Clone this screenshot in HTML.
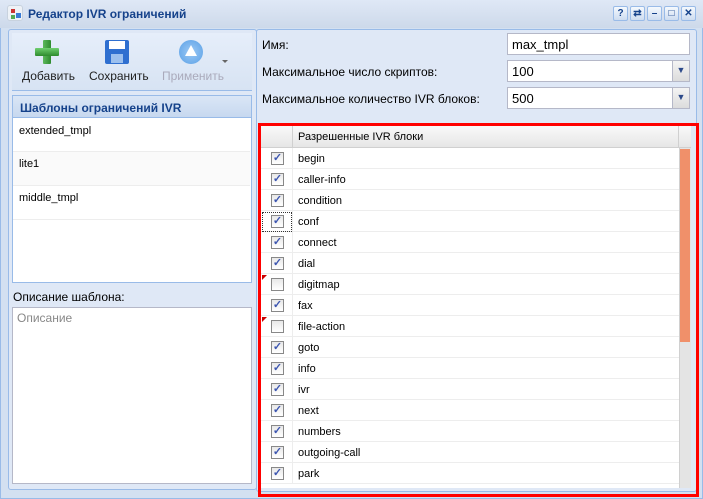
<!DOCTYPE html><html><head><meta charset="utf-8"><style>
*{box-sizing:border-box;margin:0;padding:0}
body{width:703px;height:499px;overflow:hidden;background:#cdd9e8;font-family:"Liberation Sans",sans-serif;font-size:11px;color:#000;position:relative}
.a{position:absolute}
.win{left:0;top:0;width:703px;height:499px;background:#d3e0f1;border:1px solid #99bbe8}
.title{left:0;top:0;width:703px;height:28px;background:linear-gradient(#dfe8f6,#cdd9ea)}
.panel{background:#dfe8f6;border:1px solid #99bbe8}
.tb{font-size:12px;color:#222}
.inp{background:#fff;border:1px solid #b5b8c8;font-size:13px;padding:3px 4px}
.btn{width:15px;height:15px;border:1px solid #99bbe8;border-radius:2px;background:linear-gradient(#f5f9fe,#cddcf0);font-size:10px;text-align:center;line-height:13px;color:#15428b;font-weight:bold}
.row{left:0;width:418px;height:21px;border-bottom:1px solid #ededed;font-size:11px}
.row span{position:absolute;left:37px;top:5px}
.cb{position:absolute;left:10px;top:4px;width:13px;height:13px;border:1px solid #888;background:linear-gradient(#e8e8e8,#fff);color:#3d56b0;font-size:11px;line-height:11px;text-align:center;font-weight:bold}
.vl{position:absolute;left:31px;top:0;width:1px;height:100%;background:#ededed}
</style></head><body>
<div class="a win"></div>
<div class="a title"></div>
<div class="a" style="left:7px;top:5px;width:16px;height:16px;border-radius:3px;background:#eef2f7;border:1px solid #c8d2de"><div class="a" style="left:3px;top:3px;width:4px;height:4px;background:#c33"></div><div class="a" style="left:8px;top:7px;width:5px;height:5px;background:#3a7bd5"></div><div class="a" style="left:3px;top:9px;width:4px;height:4px;background:#5a5"></div></div>
<div class="a" style="left:28px;top:7px;font-size:12px;font-weight:bold;color:#15428b">Редактор IVR ограничений</div>
<div class="a btn" style="left:613px;top:6px">?</div>
<div class="a btn" style="left:630px;top:6px">⇄</div>
<div class="a btn" style="left:647px;top:6px">–</div>
<div class="a btn" style="left:664px;top:6px">□</div>
<div class="a btn" style="left:681px;top:6px">✕</div>

<div class="a panel" style="left:8px;top:29px;width:249px;height:461px;border-radius:3px"></div>
<div class="a" style="left:12px;top:33px;width:240px;height:58px;background:linear-gradient(#e6eefa,#d7e3f3);border-bottom:1px solid #99bbe8"></div>
<div class="a" style="left:35px;top:40px;width:24px;height:24px"><div class="a" style="left:8px;top:0;width:8px;height:24px;background:linear-gradient(90deg,#5cb85c,#2e8b2e);border-radius:1px"></div><div class="a" style="left:0;top:8px;width:24px;height:8px;background:linear-gradient(#6fcf6f,#2e8b2e);border-radius:1px"></div></div>
<div class="a tb" style="left:22px;top:69px">Добавить</div>
<div class="a" style="left:105px;top:40px;width:24px;height:24px;background:#2f6fd0;border-radius:2px"><div class="a" style="left:4px;top:1px;width:16px;height:8px;background:#fff"></div><div class="a" style="left:6px;top:14px;width:12px;height:9px;background:#9cc0ee"></div></div>
<div class="a tb" style="left:89px;top:69px">Сохранить</div>
<div class="a" style="left:179px;top:40px;width:24px;height:24px;border-radius:50%;background:radial-gradient(#9cc9f5,#5aa0e6)"><div class="a" style="left:6px;top:5px;width:0;height:0;border-left:6px solid transparent;border-right:6px solid transparent;border-bottom:11px solid #fff"></div></div>
<div class="a tb" style="left:162px;top:69px;color:#aab">Применить</div>
<div class="a" style="left:222px;top:60px;border-left:3px solid transparent;border-right:3px solid transparent;border-top:3px solid #666"></div>
<div class="a" style="left:12px;top:95px;width:240px;height:23px;background:linear-gradient(#dae6f6,#c7d8ef);border:1px solid #99bbe8;font-weight:bold;color:#15428b;font-size:12px;padding:5px 7px">Шаблоны ограничений IVR</div>
<div class="a" style="left:12px;top:118px;width:240px;height:165px;background:#fff;border:1px solid #99bbe8;border-top:none"></div>
<div class="a" style="left:13px;top:118px;width:237px;height:34px;border-bottom:1px solid #ededed;padding:7px 6px">extended_tmpl</div>
<div class="a" style="left:13px;top:152px;width:237px;height:34px;background:#fafafa;border-bottom:1px solid #ededed;padding:6px 6px">lite1</div>
<div class="a" style="left:13px;top:186px;width:237px;height:34px;border-bottom:1px solid #ededed;padding:6px 6px">middle_tmpl</div>
<div class="a" style="left:13px;top:290px;font-size:12px">Описание шаблона:</div>
<div class="a" style="left:12px;top:307px;width:240px;height:177px;background:#fff;border:1px solid #b5b8c8;color:#888;font-size:12px;padding:3px 4px">Описание</div>

<div class="a panel" style="left:256px;top:29px;width:441px;height:463px;border-radius:3px"></div>
<div class="a" style="left:262px;top:38px;font-size:12px">Имя:</div>
<div class="a" style="left:262px;top:65px;font-size:12px">Максимальное число скриптов:</div>
<div class="a" style="left:262px;top:92px;font-size:12px">Максимальное количество IVR блоков:</div>
<div class="a inp" style="left:507px;top:33px;width:183px;height:22px">max_tmpl</div>
<div class="a inp" style="left:507px;top:60px;width:183px;height:22px">100</div>
<div class="a inp" style="left:507px;top:87px;width:183px;height:22px">500</div>
<div class="a" style="left:672px;top:61px;width:17px;height:20px;background:linear-gradient(#f4f4f4,#dcdcdc);border-left:1px solid #b5b8c8;color:#2d4a8a;font-size:9px;text-align:center;line-height:18px">▼</div>
<div class="a" style="left:672px;top:88px;width:17px;height:20px;background:linear-gradient(#f4f4f4,#dcdcdc);border-left:1px solid #b5b8c8;color:#2d4a8a;font-size:9px;text-align:center;line-height:18px">▼</div>

<div class="a" style="left:258px;top:123px;width:441px;height:374px;border:3px solid #f00"></div>
<div class="a" style="left:261px;top:126px;width:430px;height:362px;background:#fff;overflow:hidden">
<div class="a" style="left:0;top:0;width:430px;height:22px;background:linear-gradient(#f9f9f9,#e6e6e6);border-bottom:1px solid #d0d0d0"><div class="vl" style="background:#d0d0d0"></div><span class="a" style="left:37px;top:5px">Разрешенные IVR блоки</span><div class="a" style="left:417px;top:0;width:1px;height:22px;background:#d0d0d0"></div></div>
<div class="a" style="left:0;top:22px;width:418px;height:340px">
<div class="a row" style="top:0"><div class="vl"></div><div class="cb">✓</div><span>begin</span></div>
<div class="a row" style="top:21px"><div class="vl"></div><div class="cb">✓</div><span>caller-info</span></div>
<div class="a row" style="top:42px"><div class="vl"></div><div class="cb">✓</div><span>condition</span></div>
<div class="a row" style="top:63px"><div class="vl"></div><div class="a" style="left:1px;top:1px;width:30px;height:20px;border:1px dotted #333"></div><div class="cb">✓</div><span>conf</span></div>
<div class="a row" style="top:84px"><div class="vl"></div><div class="cb">✓</div><span>connect</span></div>
<div class="a row" style="top:105px"><div class="vl"></div><div class="cb">✓</div><span>dial</span></div>
<div class="a row" style="top:126px"><div class="vl"></div><div class="a" style="left:1px;top:1px;border-top:5px solid #c00;border-right:5px solid transparent"></div><div class="cb"></div><span>digitmap</span></div>
<div class="a row" style="top:147px"><div class="vl"></div><div class="cb">✓</div><span>fax</span></div>
<div class="a row" style="top:168px"><div class="vl"></div><div class="a" style="left:1px;top:1px;border-top:5px solid #c00;border-right:5px solid transparent"></div><div class="cb"></div><span>file-action</span></div>
<div class="a row" style="top:189px"><div class="vl"></div><div class="cb">✓</div><span>goto</span></div>
<div class="a row" style="top:210px"><div class="vl"></div><div class="cb">✓</div><span>info</span></div>
<div class="a row" style="top:231px"><div class="vl"></div><div class="cb">✓</div><span>ivr</span></div>
<div class="a row" style="top:252px"><div class="vl"></div><div class="cb">✓</div><span>next</span></div>
<div class="a row" style="top:273px"><div class="vl"></div><div class="cb">✓</div><span>numbers</span></div>
<div class="a row" style="top:294px"><div class="vl"></div><div class="cb">✓</div><span>outgoing-call</span></div>
<div class="a row" style="top:315px"><div class="vl"></div><div class="cb">✓</div><span>park</span></div>
</div>
<div class="a" style="left:418px;top:22px;width:12px;height:340px;background:#e4e4e4;border-left:1px solid #d0d0d0"><div class="a" style="left:0;top:1px;width:10px;height:193px;background:#f0906a"></div></div>
</div>
</body></html>
